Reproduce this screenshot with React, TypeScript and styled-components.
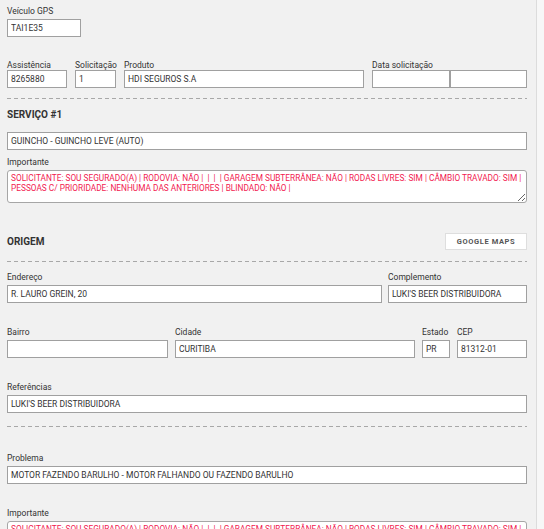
import React from "react";
import styled, { createGlobalStyle } from "styled-components";

const GlobalStyle = createGlobalStyle`
  html, body {
    margin: 0;
    height: 100%;
    overflow: hidden;
    background: #f7f7f7;
  }
  body {
    font-family: Roboto, "Liberation Sans", Arial, sans-serif;
    color: #333;
  }
`;

const Page = styled.div`
  box-sizing: border-box;
  width: 537px;
  min-height: 100%;
  padding: 5px 9px 0 7px;
  background: #f1f1f1;
  border-right: 1px solid #dcdcdc;
`;

const Row = styled.div<{ $top?: number; $gap?: number }>`
  display: flex;
  align-items: flex-start;
  gap: ${props => props.$gap ?? 7}px;
  margin-top: ${props => props.$top ?? 0}px;
`;

const Field = styled.div<{ $width?: number; $top?: number }>`
  display: flex;
  flex-direction: column;
  width: ${props => (props.$width ? `${props.$width}px` : "100%")};
  flex: ${props => (props.$width ? "none" : "1")};
  margin-top: ${props => props.$top ?? 0}px;
`;

const Label = styled.label<{ $tight?: boolean }>`
  display: block;
  font-size: 8.5px;
  line-height: 12px;
  height: 12px;
  white-space: nowrap;
  color: #333;
  margin-bottom: ${props => (props.$tight ? -1 : 2)}px;
`;

const Input = styled.input<{ $width?: number }>`
  box-sizing: border-box;
  width: ${props => (props.$width ? `${props.$width}px` : "100%")};
  height: 18px;
  margin: 0;
  padding: 0 3px;
  border: 1px solid #a0a0a0;
  border-radius: 0;
  background: #fff;
  font-family: Roboto, "Liberation Sans", Arial, sans-serif;
  font-size: 8.5px;
  color: #333;
  outline: none;
`;

const DateGroup = styled.div`
  display: flex;
`;

const TextArea = styled.textarea`
  box-sizing: border-box;
  width: 100%;
  height: 33px;
  margin: 0;
  padding: 2px 3px;
  border: 1px solid #a6a6a6;
  border-radius: 3px;
  background: #fff;
  font-family: Roboto, "Liberation Sans", Arial, sans-serif;
  font-size: 8.3px;
  line-height: 10px;
  color: #f2194f;
  resize: vertical;
  overflow: hidden;
  outline: none;
  display: block;
`;

const Divider = styled.div<{ $top: number }>`
  height: 1px;
  margin-top: ${props => props.$top}px;
  background: repeating-linear-gradient(to right, #a8a8a8 0 4px, transparent 4px 7px);
`;

const SectionTitle = styled.h2<{ $top?: number }>`
  margin: ${props => props.$top ?? 0}px 0 0;
  font-size: 10px;
  line-height: 14px;
  height: 14px;
  font-weight: 700;
  color: #333;
`;

const HeaderRow = styled.div<{ $top: number }>`
  display: flex;
  align-items: center;
  justify-content: space-between;
  height: 17px;
  margin-top: ${props => props.$top}px;
`;

const MapsButton = styled.button`
  box-sizing: border-box;
  width: 82px;
  height: 17px;
  padding: 0;
  border: 1px solid #dedede;
  background: #fff;
  font-family: Roboto, "Liberation Sans", Arial, sans-serif;
  font-size: 7.5px;
  font-weight: 700;
  letter-spacing: 0.6px;
  color: #555;
  cursor: pointer;
`;

const IMPORTANTE =
  "SOLICITANTE: SOU SEGURADO(A) | RODOVIA: NÃO |  |  |  | GARAGEM SUBTERRÂNEA: NÃO | RODAS LIVRES: SIM | CÂMBIO TRAVADO: SIM | PESSOAS C/ PRIORIDADE: NENHUMA DAS ANTERIORES | BLINDADO: NÃO |";

export default function App() {
  return (
    <>
      <GlobalStyle />
      <Page>
        <Field $width={74}>
          <Label>Veículo GPS</Label>
          <Input readOnly value="TAI1E35" />
        </Field>

        <Row $top={22} $gap={8}>
          <Field $width={60}>
            <Label $tight>Assistência</Label>
            <Input readOnly value="8265880" />
          </Field>
          <Field $width={41}>
            <Label $tight>Solicitação</Label>
            <Input readOnly value="1" />
          </Field>
          <Field $width={240}>
            <Label $tight>Produto</Label>
            <Input readOnly value="HDI SEGUROS S.A" />
          </Field>
          <Field>
            <Label $tight>Data solicitação</Label>
            <DateGroup>
              <Input readOnly value="" $width={78} />
              <Input readOnly value="" />
            </DateGroup>
          </Field>
        </Row>

        <Divider $top={10} />

        <SectionTitle $top={9}>SERVIÇO #1</SectionTitle>
        <Row $top={10}>
          <Input readOnly value="GUINCHO - GUINCHO LEVE (AUTO)" />
        </Row>
        <Field $top={6}>
          <Label>Importante</Label>
          <TextArea readOnly value={IMPORTANTE} />
        </Field>

        <HeaderRow $top={30}>
          <SectionTitle>ORIGEM</SectionTitle>
          <MapsButton type="button">GOOGLE MAPS</MapsButton>
        </HeaderRow>

        <Divider $top={11} />

        <Row $top={9} $gap={6}>
          <Field $width={375}>
            <Label>Endereço</Label>
            <Input readOnly value="R. LAURO GREIN, 20" />
          </Field>
          <Field>
            <Label>Complemento</Label>
            <Input readOnly value="LUKI'S BEER DISTRIBUIDORA" />
          </Field>
        </Row>

        <Row $top={23}>
          <Field $width={161}>
            <Label>Bairro</Label>
            <Input readOnly value="" />
          </Field>
          <Field $width={240}>
            <Label>Cidade</Label>
            <Input readOnly value="CURITIBA" />
          </Field>
          <Field $width={28}>
            <Label>Estado</Label>
            <Input readOnly value="PR" />
          </Field>
          <Field>
            <Label>CEP</Label>
            <Input readOnly value="81312-01" />
          </Field>
        </Row>

        <Field $top={23}>
          <Label>Referências</Label>
          <Input readOnly value="LUKI'S BEER DISTRIBUIDORA" />
        </Field>

        <Divider $top={13} />

        <Field $top={25}>
          <Label>Problema</Label>
          <Input readOnly value="MOTOR FAZENDO BARULHO - MOTOR FALHANDO OU FAZENDO BARULHO" />
        </Field>
        <Field $top={23}>
          <Label>Importante</Label>
          <TextArea readOnly value={IMPORTANTE} />
        </Field>
      </Page>
    </>
  );
}
